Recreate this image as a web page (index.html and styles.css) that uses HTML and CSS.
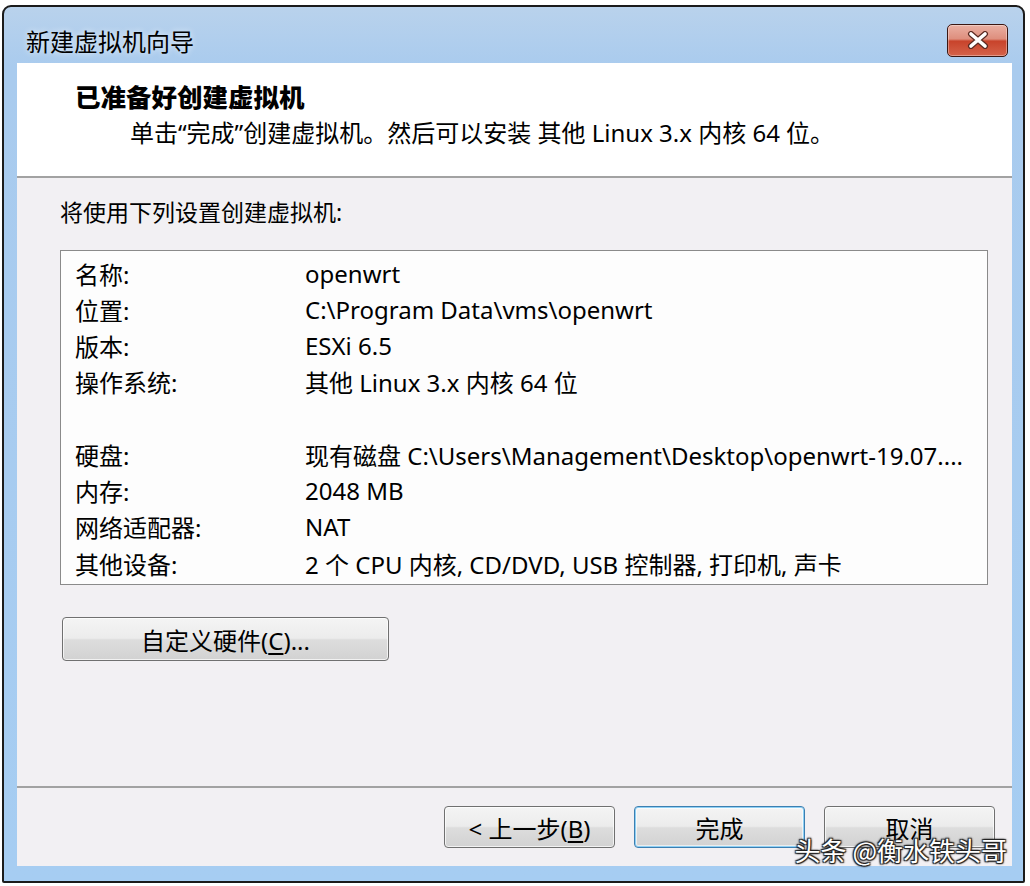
FILE: index.html
```html
<!DOCTYPE html>
<html>
<head>
  <meta charset="utf-8">
  <title>新建虚拟机向导</title>
  <link rel="stylesheet" href="styles.css">
</head>
<body>
  <div class="window">
    <div class="title-bar">
      <div class="title-text">新建虚拟机向导</div>
      <button class="close-btn" aria-label="关闭">
        <svg width="26" height="18" viewBox="0 0 26 18">
          <path d="M6 3 L20 15 M20 3 L6 15" stroke="#5a2a22" stroke-width="6" stroke-linecap="round"/>
          <path d="M6 3 L20 15 M20 3 L6 15" stroke="#ffffff" stroke-width="3.6" stroke-linecap="round"/>
        </svg>
      </button>
    </div>

    <div class="client">
      <div class="wizard-header">
        <div class="header-title">已准备好创建虚拟机</div>
        <div class="header-sub">单击“完成”创建虚拟机。然后可以安装 其他 Linux 3.x 内核 64 位。</div>
      </div>

      <div class="wizard-body">
        <div class="intro">将使用下列设置创建虚拟机:</div>

        <div class="summary">
          <div class="row"><span class="label">名称:</span><span class="value">openwrt</span></div>
          <div class="row"><span class="label">位置:</span><span class="value">C:\Program Data\vms\openwrt</span></div>
          <div class="row"><span class="label">版本:</span><span class="value">ESXi 6.5</span></div>
          <div class="row"><span class="label">操作系统:</span><span class="value">其他 Linux 3.x 内核 64 位</span></div>
          <div class="row"></div>
          <div class="row"><span class="label">硬盘:</span><span class="value">现有磁盘 C:\Users\Management\Desktop\openwrt-19.07....</span></div>
          <div class="row"><span class="label">内存:</span><span class="value">2048 MB</span></div>
          <div class="row"><span class="label">网络适配器:</span><span class="value">NAT</span></div>
          <div class="row"><span class="label">其他设备:</span><span class="value">2 个 CPU 内核, CD/DVD, USB 控制器, 打印机, 声卡</span></div>
        </div>

        <button class="win-btn custom-btn">自定义硬件(<u>C</u>)...</button>
      </div>

      <div class="wizard-footer">
        <button class="win-btn">&lt; 上一步(<u>B</u>)</button>
        <button class="win-btn default">完成</button>
        <button class="win-btn">取消</button>
      </div>
    </div>

    <div class="watermark">头条 @衡水铁头哥</div>
  </div>
</body>
</html>
```

FILE: styles.css
```css
* {
  margin: 0;
  padding: 0;
  box-sizing: border-box;
}

body {
  background: #fff;
  overflow: hidden;
  font-family: "Noto Sans", "Noto Sans CJK SC", sans-serif;
  color: #000;
}

/* Fensterrahmen */
.window {
  position: relative;
  width: 1023px;
  height: 878px;
  margin: 5px 0 0 2px;
  border: 2px solid #1b1b1b;
  border-radius: 9px 9px 2px 2px;
  background: linear-gradient(to bottom, #b9d2ec 0px, #a9cbee 60px, #a6cdf2 100%);
  padding: 0 11px 0 13px;
}

.title-bar {
  height: 56px;
  padding: 10px 4px 0 9px;
  display: flex;
  align-items: center;
  justify-content: space-between;
}

.title-text {
  font-family: "Noto Sans CJK SC", sans-serif;
  font-size: 24px;
  color: #000;
  text-shadow: 0 0 6px rgba(255, 255, 255, 0.8);
}

.close-btn {
  width: 61px;
  height: 33px;
  border: 1.5px solid #3b1712;
  border-radius: 5px;
  background: linear-gradient(to bottom, #eab0a3 0%, #de8e7d 45%, #c8432b 52%, #d5634a 100%);
  box-shadow: inset 0 0 0 1px rgba(255, 255, 255, 0.35);
  display: flex;
  align-items: center;
  justify-content: center;
}

.client {
  height: 803px;
  display: flex;
  flex-direction: column;
  background: #f2f0f3;
}

/* Kopfbereich */
.wizard-header {
  height: 115px;
  background: #fff;
  border-bottom: 2px solid #a2a2a2;
  padding-top: 18px;
}

.header-title {
  padding-left: 58px;
  font-family: "Noto Sans CJK SC", sans-serif;
  font-size: 25.5px;
  font-weight: 900;
  line-height: 30px;
}

.header-sub {
  padding-left: 113px;
  margin-top: 7px;
  font-size: 24px;
  line-height: 30px;
}

/* Inhalt */
.wizard-body {
  flex: 1;
  padding: 19px 0 0 43px;
}

.intro {
  font-size: 23px;
  line-height: 30px;
}

.summary {
  margin-top: 23px;
  width: 928px;
  height: 335px;
  border: 1px solid #8a8a8a;
  background: #fdfdfd;
  padding: 4px 0 0 14px;
}

.row {
  display: flex;
  height: 36.25px;
  align-items: center;
  font-size: 24px;
  white-space: nowrap;
}

.label {
  width: 230px;
}

.win-btn {
  font-family: "Noto Sans", "Noto Sans CJK SC", sans-serif;
  font-size: 24px;
  color: #000;
  border: 1px solid #707070;
  border-radius: 4px;
  background: linear-gradient(to bottom, #f4f4f4 0%, #ececec 48%, #dddddd 52%, #d2d2d2 100%);
  box-shadow: inset 0 0 0 1px rgba(255, 255, 255, 0.7);
}

.win-btn u {
  text-underline-offset: 3px;
}

.custom-btn {
  margin: 32px 0 0 2px;
  width: 327px;
  height: 44px;
}

/* Fußbereich */
.wizard-footer {
  height: 80px;
  border-top: 2px solid #a2a2a2;
  display: flex;
  justify-content: flex-end;
  gap: 19px;
  padding: 18px 17px 0 0;
}

.wizard-footer .win-btn {
  width: 171px;
  height: 42px;
}

.wizard-footer .default {
  border: 1.5px solid #3c7fb1;
  box-shadow: inset 0 0 0 1px #8fd0f4, inset 0 0 0 2px rgba(255, 255, 255, 0.6);
}

/* Wasserzeichen */
.watermark {
  position: absolute;
  right: 16px;
  bottom: 13px;
  font-family: "Noto Sans CJK SC", sans-serif;
  font-size: 26px;
  color: #fff;
  text-shadow: 1px 1px 1px #222, -1px -1px 1px #222, 1px -1px 1px #222, -1px 1px 1px #222, 0 0 3px #000;
}
```
